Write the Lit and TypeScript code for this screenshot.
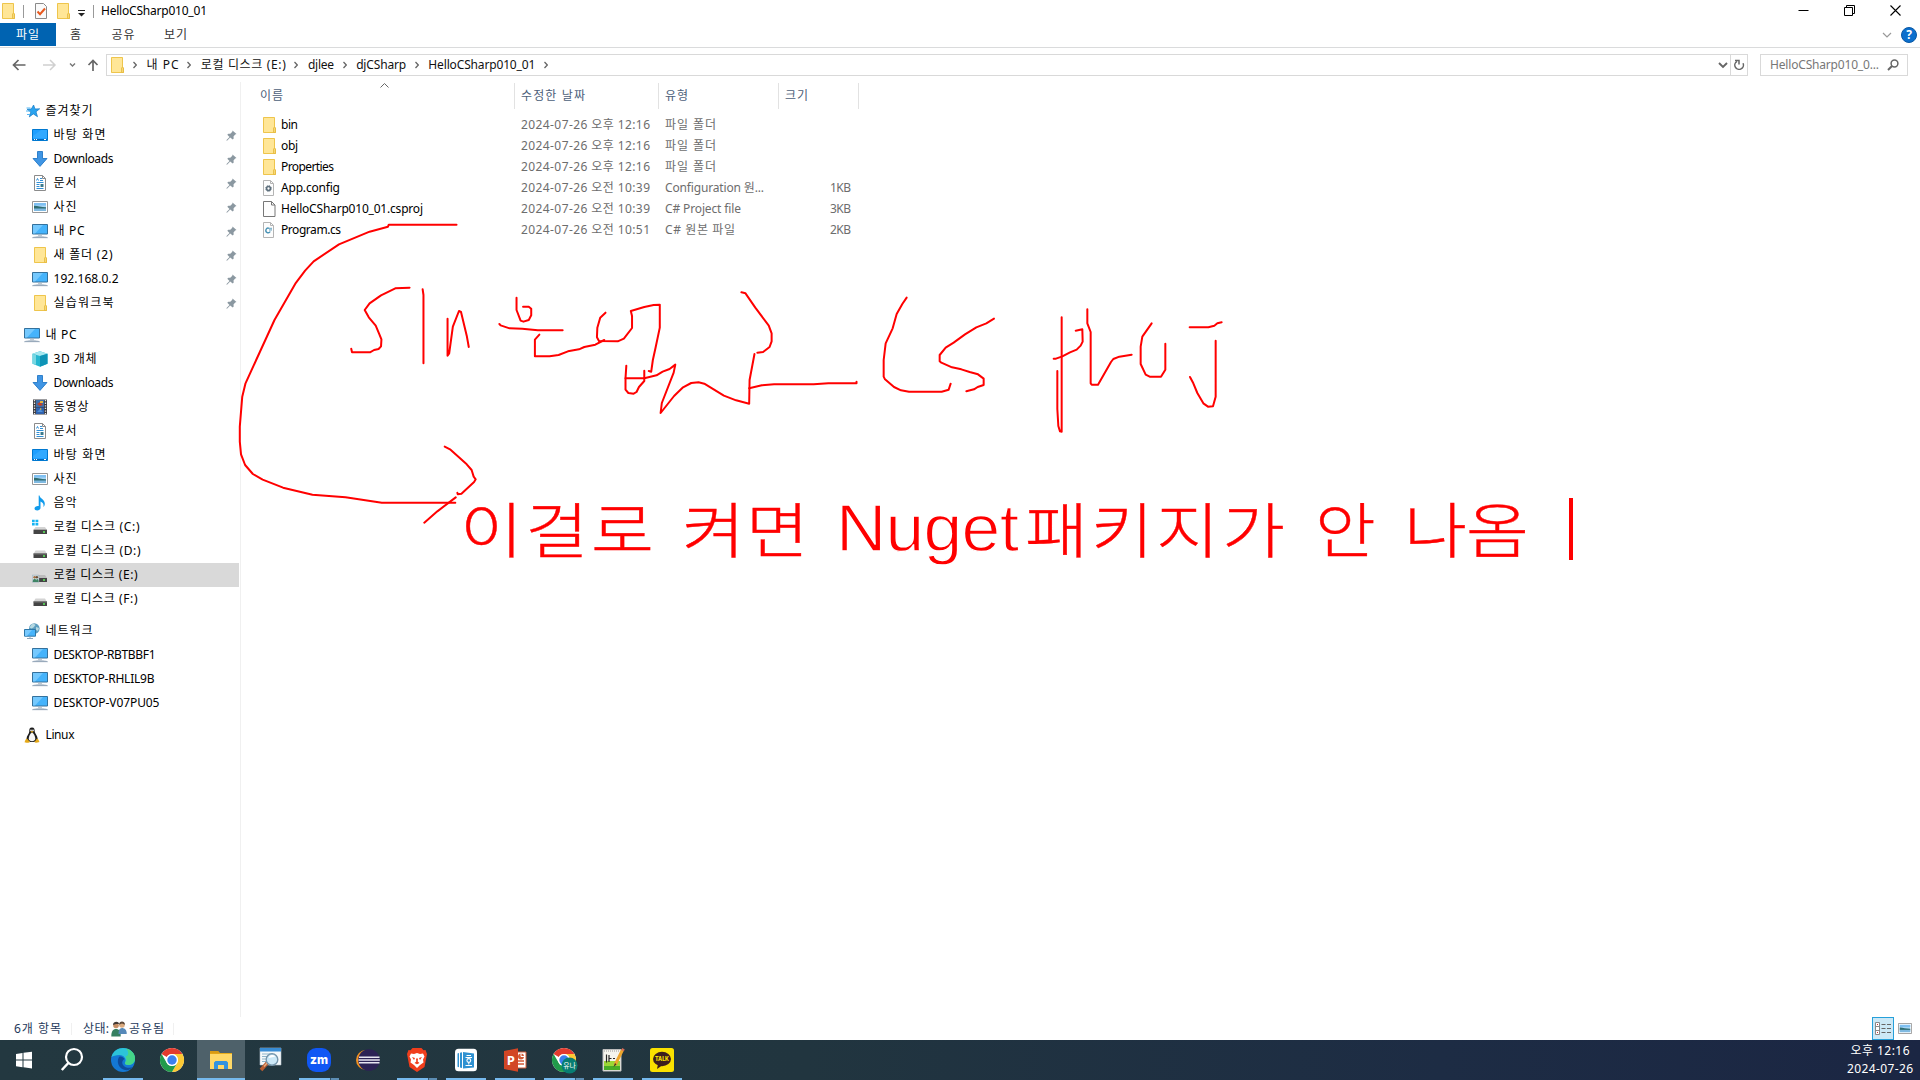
import { LitElement, html, svg, css } from "lit";
import { customElement, property, query } from "lit/decorators.js";
import { classMap } from "lit/directives/class-map.js";

/* A run of text tracked so that it fills a given width; glyphs may be stretched sideways. */
@customElement("fit-text")
class FitText extends LitElement {
  @property({ type: Number }) w = 0;
  @property({ type: Number }) stretch = 1;
  @property() text = "";
  @query(".run") run!: HTMLSpanElement;

  static styles = css`
    :host { display: block; flex: none; white-space: pre; }
    .run { display: inline-block; transform-origin: 0 50%; }
  `;

  updated() {
    const el = this.run;
    this.style.width = `${this.w}px`;
    el.style.letterSpacing = "0";
    el.style.transform = "none";
    const gaps = Math.max(1, [...this.text].length - 1);
    el.style.letterSpacing = `${(this.w / this.stretch - el.getBoundingClientRect().width) / gaps}px`;
    if (this.stretch !== 1) el.style.transform = `scaleX(${this.stretch})`;
  }

  render() {
    return html`<span class="run">${this.text}</span>`;
  }
}

const fit = (text: string, w: number, cls = "", stretch = 1) =>
  html`<fit-text class=${cls} .text=${text} .w=${w} .stretch=${stretch}></fit-text>`;

const icon = (body: unknown, size = 16) =>
  html`<svg class="ic" width=${size} height=${size} viewBox="0 0 16 16">${body}</svg>`;

const ICONS: Record<string, unknown> = {
  folder: svg`<path d="M2 .5h12v15H2z" fill="#ffe591"/><path d="M2.5.5h11v10.5h1v4.5h-12z" fill="#ffe697" stroke="#eec54c"/><path d="M12.5 15.5V11l1-1 1 1v4.5z" fill="#f7d775" stroke="#e5b93d" stroke-width=".8"/>`,
  star: svg`<path d="M9.600 2l1.400 4 4.700-.2-3.700 3 1.500 4.900-4.200-2.800-4 3 1.500-4.800-3.700-2.800 4.200-.3z" fill="#29a3ef" stroke="#1479c4" stroke-width=".7"/><path d="M2.500 5h4M2 8h4M3 11.500h3" stroke="#55b6f2" stroke-width="1"/>`,
  desktop: svg`<path d="M.5 2.500h15v11H.5z" fill="#1e9fff" stroke="#0078d0"/><path d="M1 9l8-6h6v8H1z" fill="#46b3ff" opacity=".5"/><path d="M1 12.500h14" stroke="#0567b8"/><path d="M2 12.500h1M4 12.500h1M12 12.500h2" stroke="#fff"/>`,
  download: svg`<path d="M5.500.5h5v7h4.500L8 15.400 1 7.500h4.500z" fill="#3f95e4" stroke="#2478c6" stroke-width=".9"/>`,
  document: svg`<path d="M2.500.5h8l3 3v12h-11z" fill="#fff" stroke="#8b8b8b"/><path d="M10.500.5v3h3" fill="none" stroke="#8b8b8b"/><path d="M4.500 5.500l1-2 1 2M8 3.500h2M8 5.500h3M4.500 7.500h7M4.500 9.500h3M4.500 11.500h3M4.500 13.500h7" fill="none" stroke="#318fd5"/><path d="M8.500 9h3v3h-3z" fill="#3c7a8c"/>`,
  picture: svg`<path d="M.5 2.500h15v11H.5z" fill="#fff" stroke="#979797"/><path d="M2 4h12v8H2z" fill="#a9d6f6"/><path d="M2 4h12v2.500H2z" fill="#7fc0f2"/><path d="M2 6.800c3-.2 7 1.400 12 1.400V10H2z" fill="#2f6d72"/><path d="M2 9.500h12V12H2z" fill="#7fb9e0"/>`,
  pc: svg`<path d="M.5 1.500h15v9.500H.5z" fill="#45b3fb" stroke="#34719c"/><path d="M1 2h10L3 10.500H1z" fill="#86d0ff" opacity=".75"/><path d="M6 11.500h4v1.200H6z" fill="#a6b5c0"/><path d="M.5 14.700C3 13.500 13 13.500 15.500 14.700z" fill="#90a5b8" stroke="#8fa2b4" stroke-width=".7"/>`,
  cube: svg`<path d="M8 .3l7.500 2.500v10L8 15.700.5 12.800v-10z" fill="#25b6cf"/><path d="M8 .3l7.500 2.500L8 5 .5 2.800z" fill="#a7e7ef"/><path d="M8 5l7.500-2.200v10L8 15.700z" fill="#0e93b6"/><path d="M.5 2.800L4 4v9.700l-3.500-.9z" fill="#78d7e2"/>`,
  video: svg`<path d="M1 .5h14v15H1z" fill="#3b3b40"/><path d="M4 1h8v7H4z" fill="#3f6ea8"/><path d="M4 8.500h8V15H4z" fill="#2f62ae"/><path d="M5 5l3-2 3 3-3 1z" fill="#c0402a"/><path d="M8 2h3v2H8z" fill="#e4b640"/><path d="M5 13l3-3 3 3z" fill="#4d8fd8"/><path d="M8 9l2 1-2 1z" fill="#e4b640"/><path d="M2.500 1v15M13.500 1v15" stroke="#e8e8e8" stroke-width="1.300" stroke-dasharray="1.300 1.300"/>`,
  music: svg`<path d="M7.500.5c.3 3 5.500 4 5.300 8.500-.1 1.600-.8 2.500-1.500 3 .8-3-.5-4.600-2.800-5.500v6.300c0 1.700-1.500 2.700-3.300 2.700-1.600 0-2.700-.8-2.700-2 0-1.700 2.300-3 4.200-2.500V.5z" fill="#109bec"/>`,
  drive: svg`<path d="M3.500 7.500h9.500l2 3.500H1.500z" fill="#d4d4d4"/><path d="M1.500 10.500h13.500V15H1.500z" fill="#444"/><path d="M1.500 10.500h13.500v1H1.500z" fill="#707070"/><path d="M11 13h2" stroke="#5cf05c" stroke-width="1.500"/>`,
  driveWin: svg`<path d="M0 .8h2.700v2.400H0zM3.500.8h2.800v2.400H3.500zM0 4h2.700v2.400H0zM3.500 4h2.800v2.400H3.500z" fill="#16b4f3"/><path d="M3.500 8h9.500l2 3H1.500z" fill="#d4d4d4"/><path d="M1.500 10.700h13.500v4.300H1.500z" fill="#444"/><path d="M11 13h2" stroke="#5cf05c" stroke-width="1.500"/>`,
  driveShare: svg`<path d="M4.500 8h8.500l2 3H3z" fill="#bcbcbc"/><path d="M7 11h8v4H7z" fill="#444"/><path d="M11 13h2" stroke="#5cf05c" stroke-width="1.500"/><path d="M.3 8.200h6.500v7H.3z" fill="#dbe7ee" stroke="#94a8b3" stroke-width=".6"/><circle cx="2.600" cy="10.300" r="1.300" fill="#a87040"/><circle cx="4.900" cy="10.300" r="1.200" fill="#6b5038"/><path d="M.8 15c0-4 3-4 3.400-1.500C4.700 11 6.700 12 6.700 15z" fill="#3e8464"/>`,
  network: svg`<circle cx="10.300" cy="5.500" r="5.300" fill="#5c9dbf"/><path d="M7.500 1.500c2-1.500 3-.5 4 .5l-2 2.500-2 1-2-1zM12 4l3 1-1 3-2-1z" fill="#b6d9e2"/><path d="M.5 6.500h11v6.700H.5z" fill="#47b4fb" stroke="#2d77a8"/><path d="M1 7h7l-5 6H1z" fill="#8bd2ff" opacity=".7"/><path d="M3 15.500h6M6 13.500v2" stroke="#8ea5b8"/>`,
  linux: svg`<path d="M8 .4c2.400 0 2.800 1.800 2.700 4 .1 1.800 3 4.200 3 7.700 0 2.300-2.500 3-5.700 3s-5.500-.8-5.500-3c0-3.400 2.700-5.500 2.800-7.700C5.200 2 5.600.4 8 .4z" fill="#1b1b1b"/><path d="M8 5.600c1.800.8 3.300 4 3.300 6.200 0 1.700-1.500 2.400-3.300 2.400s-3.300-.7-3.300-2.400C4.700 9.600 6.200 6.400 8 5.600z" fill="#f6f6f6"/><circle cx="7" cy="3.400" r=".8" fill="#fff"/><circle cx="9" cy="3.400" r=".8" fill="#fff"/><path d="M6.400 4.700L8 4l1.600.7L8 5.800z" fill="#edb21e"/><path d="M3 11.500l3 3.500c-1 1.300-3 .7-5.500.2.800-1.200.5-3 2.500-3.700zM13 11.500L10.500 15c1 1.300 2.500.5 5 0-1-1.200-.5-2.800-2.500-3.500z" fill="#e5a918"/>`,
  config: svg`<path d="M2.500.5h7l3 3v12h-10z" fill="#fdfdfd" stroke="#b4b4b4"/><path d="M9.500.5v3h3" fill="none" stroke="#b4b4b4"/><circle cx="7.500" cy="8.500" r="1.900" fill="none" stroke="#5d6f7c" stroke-width="1.500"/><circle cx="7.500" cy="8.500" r="2.900" fill="none" stroke="#5d6f7c" stroke-width="1" stroke-dasharray="1.140 1.140"/>`,
  blank: svg`<path d="M2.500.5h8l3.500 3.500v11.500H2.500z" fill="#fdfdfd" stroke="#777"/><path d="M10.500.5V4H14" fill="none" stroke="#777"/>`,
  cs: svg`<path d="M2.500.5h7l3 3v12h-10z" fill="#fdfdfd" stroke="#b4b4b4"/><path d="M9.500.5v3h3" fill="none" stroke="#b4b4b4"/><path d="M8 6.300A2.300 2.300 0 1 0 9.200 9.500" fill="none" stroke="#4a93b5" stroke-width="1.400"/><path d="M8.800 5.500v3.300M10.200 5.500v3.300M8 6.500h3M8 7.900h3" stroke="#4a93b5" stroke-width=".5"/>`,
  people: svg`<circle cx="5" cy="4.500" r="2.800" fill="#c89066"/><path d="M2 4c0-4 6-4 6-1L5 3z" fill="#433a35"/><path d="M.3 15.500C.3 10 2 8 5 8s5 2 4.700 7.500z" fill="#368061"/><circle cx="11" cy="4" r="2.800" fill="#dbaa7e"/><path d="M8 3.800c0-4.500 6-4.500 6 0L11 2.500z" fill="#5e4938"/><path d="M7.500 13c0-4 1-6 3.500-6s5 2 4.700 6z" fill="#5689b9"/>`,
  doccheck: svg`<path d="M2.500.5h8l3 3v12h-11z" fill="#fafafa" stroke="#8a8a8a"/><path d="M4.500 8.500l2.500 2.700 5-5.700" fill="none" stroke="#e8591f" stroke-width="2"/>`,
};

const pin = html`<svg class="pin" width="11" height="11" viewBox="0 0 11 11"><path d="M6.500.5l4 3.600-1.300.5-1.700 2 .2 2-1 1L4.200 7.500 1 10.700l-.7-.5L3.500 7 1.300 4.700l1-.9h2l2-2z" fill="#8b98a1"/></svg>`;

type Item = { icon: string; label: string; w: number; head?: boolean; pin?: boolean; on?: boolean };
const GROUPS: Item[][] = [
  [
    { icon: "star", label: "즐겨찾기", w: 47, head: true },
    { icon: "desktop", label: "바탕 화면", w: 52, pin: true },
    { icon: "download", label: "Downloads", w: 60, pin: true },
    { icon: "document", label: "문서", w: 23, pin: true },
    { icon: "picture", label: "사진", w: 23, pin: true },
    { icon: "pc", label: "내 PC", w: 31, pin: true },
    { icon: "folder", label: "새 폴더 (2)", w: 59, pin: true },
    { icon: "pc", label: "192.168.0.2", w: 65, pin: true },
    { icon: "folder", label: "실습워크북", w: 60, pin: true },
  ],
  [
    { icon: "pc", label: "내 PC", w: 31, head: true },
    { icon: "cube", label: "3D 개체", w: 43 },
    { icon: "download", label: "Downloads", w: 60 },
    { icon: "video", label: "동영상", w: 35 },
    { icon: "document", label: "문서", w: 23 },
    { icon: "desktop", label: "바탕 화면", w: 52 },
    { icon: "picture", label: "사진", w: 23 },
    { icon: "music", label: "음악", w: 23 },
    { icon: "driveWin", label: "로컬 디스크 (C:)", w: 86 },
    { icon: "drive", label: "로컬 디스크 (D:)", w: 87 },
    { icon: "driveShare", label: "로컬 디스크 (E:)", w: 84, on: true },
    { icon: "drive", label: "로컬 디스크 (F:)", w: 84 },
  ],
  [
    { icon: "network", label: "네트워크", w: 47, head: true },
    { icon: "pc", label: "DESKTOP-RBTBBF1", w: 102 },
    { icon: "pc", label: "DESKTOP-RHLIL9B", w: 101 },
    { icon: "pc", label: "DESKTOP-V07PU05", w: 106 },
  ],
  [{ icon: "linux", label: "Linux", w: 29, head: true }],
];

const FILES = [
  ["folder", "bin", 17, "2024-07-26 오후 12:16", 129, "파일 폴더", 51, "", 0],
  ["folder", "obj", 17, "2024-07-26 오후 12:16", 129, "파일 폴더", 51, "", 0],
  ["folder", "Properties", 53, "2024-07-26 오후 12:16", 129, "파일 폴더", 51, "", 0],
  ["config", "App.config", 59, "2024-07-26 오전 10:39", 129, "Configuration 원...", 99, "1KB", 21],
  ["blank", "HelloCSharp010_01.csproj", 142, "2024-07-26 오전 10:39", 129, "C# Project file", 76, "3KB", 21],
  ["cs", "Program.cs", 60, "2024-07-26 오전 10:51", 129, "C# 원본 파일", 70, "2KB", 21],
] as const;

const CRUMBS: [string, number][] = [
  ["내 PC", 32], ["로컬 디스크 (E:)", 85], ["djlee", 26], ["djCSharp", 50], ["HelloCSharp010_01", 107],
];

/* Taskbar artwork, drawn on 24x24 boards. */
const chromeArt = svg`<circle cx="12" cy="12" r="12" fill="#fff"/><path d="M12 0A12 12 0 0 1 22.400 6H12a6 6 0 0 0-5.200 3L1.600 6A12 12 0 0 1 12 0z" fill="#e33b2e"/><path d="M22.400 6A12 12 0 0 1 12 24l5.200-9A6 6 0 0 0 12 6z" fill="#fcc934"/><path d="M12 24A12 12 0 0 1 1.600 6l5.200 9a6 6 0 0 0 10.400 0z" fill="#219b4b"/><circle cx="12" cy="12" r="6" fill="#fff"/><circle cx="12" cy="12" r="4.700" fill="#3c80ee"/>`;

const APPS: { art: unknown; bar?: boolean; multi?: boolean; on?: boolean }[] = [
  { art: svg`<path d="M3 6l6.500-1v6.600H3zM10.500 4.800L19 3.700v7.900h-8.500zM3 12.500h6.500v6.700L3 18.200zM10.500 12.500H19v8l-8.500-1.200z" fill="#fff"/>` },
  { art: svg`<circle cx="12" cy="9" r="8" fill="none" stroke="#fff" stroke-width="2.200"/><path d="M6.300 15L-.2 22" stroke="#fff" stroke-width="2.500"/>` },
  { bar: true, art: svg`<circle cx="12" cy="12" r="12" fill="#1478d4"/><path d="M.4 9.200C2 3 7 0 12 0c7 0 12 5 12 10.500 0 4-3 6.500-6.500 6.500-3 0-4-1.300-3.500-2.500 2-3-1-7.500-5.500-7.500-3.500 0-6.500 1-8.100 2.200z" fill="#2cc4d8"/><path d="M15 .5C21 2 24 6 24 10.500c0 4-3 6.500-6.500 6.500-3 0-4-1.300-3.500-2.500 1.500-1 2-4 .5-6 4-.5 3-6 .5-8z" fill="#45d588"/><path d="M8 9c-3 5 0 12 6 13 3 .5 6-.5 8-3-3 1.500-8 1-10-2-1.500-2.500-.5-5 1.500-6C12 9 10 8 8 9z" fill="#0d4b9c"/>` },
  { art: chromeArt },
  { on: true, bar: true, art: svg`<path d="M1 3h8l2 2h12v16H1z" fill="#e9ad1c"/><path d="M1 6h22v15H1z" fill="#ffd868"/><path d="M1 3h8l1.500 2.500H1z" fill="#d99a12"/><path d="M5 21v-6.500L6.500 13h11l1.500 1.500V21h-4v-4H9v4z" fill="#3393df"/>` },
  { art: svg`<path d="M2 0h21v17H2z" fill="#f4f8fa" stroke="#b6c4cc" stroke-width=".6"/><path d="M2 0h21v3.500H2z" fill="#398dd5"/><path d="M4 6h11M4 8.500h9M4 11h10M4 13.500h8" stroke="#8db5cb"/><path d="M10 14L3 22" stroke="#b85c31" stroke-width="3.500"/><path d="M10 14l-4 4.500" stroke="#e9ad82" stroke-width="1.300"/><circle cx="14" cy="11.500" r="5.800" fill="#c9e8f8" fill-opacity=".95" stroke="#7696ac" stroke-width="1.400"/><path d="M10.500 10a4 4 0 0 1 7-1.500z" fill="#fff"/>` },
  { bar: true, multi: true, art: svg`<rect width="24" height="24" rx="9" fill="#1057f4"/><text x="12" y="16" text-anchor="middle" font-size="12.500" font-weight="800" font-family="Inter, sans-serif" fill="#fff" textLength="18" lengthAdjust="spacingAndGlyphs">zm</text>` },
  { art: svg`<circle cx="10" cy="12" r="10" fill="#f49320"/><circle cx="13" cy="12" r="10.800" fill="#2c2255"/><path d="M3 9.300h20.500M2.500 12h21.300M3 14.700h20.500" stroke="#e7e5f1" stroke-width="1.400"/>` },
  { bar: true, multi: true, art: svg`<path d="M7.500 0h9l2 2.300 2-.2L22 6l-2.500 13-7.500 5-7.500-5L2 6l1.500-3.900 2 .2z" fill="#f03e1c"/><path d="M6 5.500l3 .5 3-1 3 1 3-.5 1.500 3-1.500 3 .5 3-3.500 2.500-3 3-3-3L5.500 14.500l.5-3-1.500-3z" fill="#fff"/><path d="M7 9l3 1-1 2zM17 9l-3 1 1 2zM11 10.500h2l-.3 3 1.800 1.500-2.500 1.200L9.500 15l1.800-1.500z" fill="#f03e1c"/>` },
  { bar: true, art: svg`<rect x="1" y=".7" width="22" height="22.500" rx="3.500" fill="#fff"/><path d="M9 4l11 1.500v14L9 20.500z" fill="#2f91d1"/><path d="M3.500 5.500l1.500-.5v14.300l-1.500-.6zM6 4.800l2-.5v15.700l-2-.6z" fill="#2f91d1"/><path d="M12.500 7.500h4.500M11.500 9.500h6.500M14.800 14.500v2M11.500 17.500h6.500" stroke="#fff" stroke-width="1.100"/><circle cx="14.800" cy="12.500" r="1.900" fill="none" stroke="#fff" stroke-width="1.100"/>` },
  { bar: true, art: svg`<path d="M12 4h11v16H12z" fill="#fff" stroke="#d25a36"/><path d="M15 13h6M15 16h6" stroke="#d25a36" stroke-width="1.300"/><circle cx="18" cy="8.500" r="3" fill="#d25a36"/><path d="M18 5v3.500h3.500" stroke="#fff" fill="none"/><path d="M1 3l14-2.800v23.600L1 21z" fill="#d24625"/><text x="7.800" y="16.800" text-anchor="middle" font-size="13" font-weight="700" font-family="Open Sans, sans-serif" fill="#fff">P</text>` },
  { bar: true, multi: true, art: svg`${chromeArt}<circle cx="17.500" cy="17.500" r="8" fill="#087d72"/><text x="17.500" y="20.200" text-anchor="middle" font-size="6.800" font-family="Noto Sans CJK KR, sans-serif" fill="#fff">유나</text>` },
  { bar: true, art: svg`<path d="M2 1.500h18v21.500H2z" fill="#f5f5ed" stroke="#bcbcbc"/><path d="M3 13h16v9H3z" fill="#9bd736"/><path d="M3 18h16v4H3z" fill="#49ad27"/><path d="M3 3h16" stroke="#999" stroke-dasharray="1 1"/><path d="M5.500 6.500v8M8 7v7M8 10.500h2.500M12 10.500h2" stroke="#272727" stroke-width="1.200"/><path d="M21.500 2L14 17" stroke="#eca52d" stroke-width="3"/><path d="M20.800 1l2.500 1.300" stroke="#d36b59" stroke-width="2"/><path d="M14 15l-1.500 4 3-2.500z" fill="#453521"/>` },
  { bar: true, art: svg`<rect width="24" height="24" rx="2.500" fill="#fae100"/><ellipse cx="12" cy="11" rx="9" ry="7.200" fill="#3c1e1e"/><path d="M8 16l-1 5 5-3.500z" fill="#3c1e1e"/><text x="12" y="13.300" text-anchor="middle" font-size="6.300" font-weight="800" font-family="Inter, sans-serif" fill="#fae100" textLength="14" lengthAdjust="spacingAndGlyphs">TALK</text>` },
];

/* Pen strokes; each set has its own origin and scale. */
const INK_LEFT = [
  "555,44 389,44 387,50 342,65 267,103 205,154 184,182 160,221 109,330 38,520 30,560 24,650 24,695 27,733 37,765 56,792 80,809 130,833 202,854 283,862 372,878 552,878",
  "526,710 539,718 580,763 592,780 597,800 602,808 598,816 567,851 558,853 557,848",
  "553,862 508,904 476,938",
  "440,233 405,235 370,256 342,280 330,300 340,322 357,347 365,370 371,388 370,409 364,417 353,420 343,427 299,427 297,416",
  "472,238 474,255 474,460",
  "533,326 533,437 537,430 546,350 561,303 566,306 580,377 585,411",
  "702,263 702,300 712,332 719,335 732,330 738,316 738,296 732,290 718,290",
  "660,342 663,346 685,355 716,356 754,361 815,361",
  "758,374 747,389 747,439 783,439 805,435 828,424 855,418 868,411 895,404 917,390",
  "920,308 907,323 900,353 899,382 904,393 950,394 965,386 985,354 985,318 982,303 1015,291 1038,285 1053,284 1053,353 1043,411 1036,450 1032,485 1026,483",
  "971,467 969,505 969,539 976,549 989,551 996,546 1002,531 1015,513 1015,482",
  "969,505 1015,505 1045,496 1060,485 1077,477 1091,464 1087,488 1058,579 1055,609 1088,558 1110,532 1130,519 1148,517 1162,521 1210,557 1240,571 1272,581 1273,510 1285,432",
  "1253,247 1263,250 1287,293 1320,347 1327,370 1327,394 1322,411 1306,426 1292,428",
  "1272,535 1303,526 1333,523 1430,523 1466,520 1535,520 1535,515",
];
const INK_RIGHT = [
  "200,53 187,72 170,102 158,145 137,190 131,240 131,290 135,298 162,321 183,331 207,335 305,335 326,329 332,311",
  "462,116 439,130 409,142 375,163 341,188 317,203 299,225 299,244 304,248 336,262 364,268 389,276 414,283 431,296 431,315 413,321 402,328 379,334",
  "665,112 665,455 660,454 655,438 652,387 652,273",
  "707,152 727,148 728,185 722,197 710,209 690,217 667,229 648,236 641,236",
  "742,88 742,130 752,156 752,310 755,314 774,314 813,246 820,237 838,230 875,224",
  "935,130 907,170 902,200 902,252 917,284 929,290 963,290 976,269 976,191",
  "1049,142 1105,142 1123,137 1132,130 1145,127",
  "1127,182 1127,350 1119,379 1104,380 1090,370 1072,339 1060,310 1050,291",
];
const ink = (sets: string[]) =>
  sets.map((points) => svg`<polyline class="ink" points=${points}></polyline>`);

@customElement("app-root")
class AppRoot extends LitElement {
  static styles = css`
    :host { display: block; }
    * { box-sizing: border-box; }
    svg { display: block; flex: none; }
    .window {
      position: relative; width: 1920px; height: 1080px; overflow: hidden; background: #fff;
      display: flex; flex-direction: column; color: #000;
      font: 12px/16px "Noto Sans", "Noto Sans CJK KR", sans-serif;
    }
    .row { display: flex; align-items: center; }
    .title { height: 23px; padding-bottom: 1px; }
    .title .sep { width: 1px; height: 13px; background: #999; }
    .sep.a { margin: 0 9px 0 7px; }
    .sep.b { margin: 0 7px 0 8px; }
    .title .fold2 { margin-left: 6px; }
    .title .drop { margin: 5px 0 0 7px; }
    .spring { flex: 1; }
    .controls { margin: -2px 19px 0 0; gap: 35px; }
    .tabs { height: 25px; border-bottom: 1px solid #dadbdc; color: #333; }
    .tabs .file { width: 56px; height: 23px; margin-bottom: 1px; padding-left: 16px; background: #0063b1; color: #fff; }
    .tabs .home { margin-left: 14px; }
    .tabs .share { margin-left: 29.500px; }
    .tabs .view { margin-left: 29.500px; }
    .tabs .chev { margin-right: 9px; }
    .tabs .help { margin-right: 3px; }
    .address { height: 34px; padding: 0 12px 0 12px; color: #111; }
    .box { height: 22px; border: 1px solid #d9d9d9; }
    .path { width: 1642px; margin-left: 7px; padding-left: 2px; }
    .crumb { margin: 0 8.600px 0 9.600px; }
    .arrow { width: 4px; }
    .path .first { margin-left: 8px; }
    .refresh { width: 17px; height: 20px; border-left: 1px solid #d9d9d9; justify-content: center; padding-left: 1px; }
    .search { width: 148px; margin-left: 12px; padding: 0 8px 0 9px; color: #777; justify-content: space-between; }
    .main { flex: 1; display: flex; min-height: 0; }
    .side { width: 241px; border-right: 1px solid #f0f0f0; padding-top: 17px; height: 935px; margin-right: 1px; }
    .group { margin-bottom: 8px; }
    .item { height: 24px; width: 239px; padding-left: 32px; gap: 5.500px; }
    .item fit-text { margin-top: -1px; }
    .item.head { padding-left: 24px; }
    .item.on { background: #d9d9d9; }
    .pin { margin-left: auto; margin-right: 2.500px; }
    .list { padding-left: 18px; }
    .cols { height: 26px; margin-top: 1px; color: #4c607a; position: relative; }
    .cols .c { height: 26px; border-right: 1px solid #e2e2e2; padding-left: 6px; }
    .cols .c1 { width: 255px; padding-left: 0; }
    .cols .c2 { width: 144px; }
    .cols .c3 { width: 120px; }
    .cols .c4 { width: 80px; }
    .caret { position: absolute; left: 120px; top: 0; }
    .files { padding-top: 5px; }
    .f { height: 21px; color: #6d6d6d; }
    .f fit-text { margin-top: 1px; }
    .f .n { width: 261px; gap: 4px; color: #000; padding-left: 1px; }
    .f .d { width: 144px; }
    .f .t { width: 120px; }
    .f .s { width: 66px; justify-content: flex-end; }
    .status { height: 23px; color: #1e395b; padding-left: 14px; }
    .status .bar { width: 1px; height: 12px; background: #f0f0f0; }
    .status .b1 { margin: 0 11px 0 10px; }
    .status .b2 { margin-left: 9px; }
    .status .ic { margin: 0 2px; }
    .viewon { width: 22px; height: 23px; background: #cce8f6; border: 1px solid #26a0da; justify-content: center; }
    .thumbs { margin: 0 8px 0 4px; }
    .task { height: 40px; padding-left: 1px; background: linear-gradient(90deg, #233840 0%, #21353f 42%, #1d2c44 75%, #1b2643 100%); }
    .app { position: relative; width: 48px; height: 40px; margin-right: 1px; display: flex; align-items: center; justify-content: center; }
    .app.on { background: #4e616a; }
    .app.bar::after { content: ""; position: absolute; left: 4px; width: 40px; bottom: 0; height: 2px; background: #76b9ed; }
    .app.on.bar::after { left: 0; width: 48px; }
    .app.multi::after { background: linear-gradient(90deg, #76b9ed 31px, #35536b 31px, #35536b 32px, #5c8db3 32px); }
    .clock { color: #fff; display: flex; flex-direction: column; align-items: center; gap: 2px; margin-right: 7px; }
    .overlay { position: absolute; left: 0; top: 0; pointer-events: none; }
    .ink { fill: none; stroke: #f00; stroke-width: 2px; stroke-linejoin: round; stroke-linecap: round; vector-effect: non-scaling-stroke; }
    .note {
      position: absolute; left: 460px; top: 488px; height: 80px; display: flex; align-items: center;
      color: #f00; font: 300 60px/80px "Noto Sans CJK KR", sans-serif; pointer-events: none;
    }
    .note .ko { -webkit-text-stroke: .4px #f00; margin-top: -3px; }
    .latin { font: 400 67px/80px "Liberation Sans", sans-serif; -webkit-text-stroke: 1.300px #fff; margin-top: -1px; }
    .w1 { margin-right: 28px; }
    .w2 { margin-right: 27px; }
    .w3 { margin-right: 6px; }
    .w4 { margin-right: 30px; }
    .w5 { margin-right: 33px; }
    .beam { width: 4px; height: 62px; background: #f00; margin: 2px 0 0 40px; }
  `;

  private arrow() {
    return html`<svg class="arrow" width="4" height="8" viewBox="0 0 4 8"><path d="M.5 1L3.300 4 .5 7" fill="none" stroke="#666" stroke-width="1.300"/></svg>`;
  }

  render() {
    return html`<div class="window">
      <div class="title row">
        ${icon(ICONS.folder)}<div class="sep a"></div>${icon(ICONS.doccheck)}
        <div class="fold2">${icon(ICONS.folder)}</div>
        <svg class="drop" width="7" height="7" viewBox="0 0 7 7"><path d="M0 .5h7" stroke="#222"/><path d="M0 3h7L3.500 6.500z" fill="#222"/></svg>
        <div class="sep b"></div>${fit("HelloCSharp010_01", 106)}
        <div class="spring"></div>
        <div class="controls row">
          <svg width="11" height="11"><path d="M.5 5.500h10" stroke="#000"/></svg>
          <svg width="11" height="11"><path d="M.5 2.500h8v8h-8zM2.500 2.500v-2h8v8h-2" fill="none" stroke="#000"/></svg>
          <svg width="11" height="11"><path d="M.5.5l10 10M10.500.5l-10 10" stroke="#000" stroke-width="1.100"/></svg>
        </div>
      </div>
      <div class="tabs row">
        <div class="file row">${fit("파일", 23)}</div>
        ${fit("홈", 12, "home")}${fit("공유", 23, "share")}${fit("보기", 23, "view")}
        <div class="spring"></div>
        <svg class="chev" width="10" height="6"><path d="M1 1l4 4 4-4" fill="none" stroke="#999" stroke-width="1.200"/></svg>
        <svg class="help" width="16" height="16"><circle cx="8" cy="8" r="7.500" fill="#0c6fcd" stroke="#0958a5"/><text x="8" y="12.200" text-anchor="middle" font-size="12" font-weight="700" fill="#fff">?</text></svg>
      </div>
      <div class="address row">
        <svg width="87" height="14" fill="none"><path d="M13.500 7H1.500M6.500 2L1.500 7l5 5" stroke="#666" stroke-width="1.700"/><path d="M31 7h12M38 2l5 5-5 5" stroke="#d0d0d0" stroke-width="1.500"/><path d="M58 5.500l2.500 2.500L63 5.500" stroke="#777" stroke-width="1.400"/><path d="M81 13V2.500M76.500 7L81 2.500 85.500 7" stroke="#666" stroke-width="1.700"/></svg>
        <div class="path box row">
          ${icon(ICONS.folder)}
          <div class="first">${this.arrow()}</div>
          ${CRUMBS.map(([c, w]) => html`${fit(c, w, "crumb")}${this.arrow()}`)}
          <div class="spring"></div>
          <svg width="14" height="8"><path d="M3 2l4 4 4-4" fill="none" stroke="#666" stroke-width="1.900"/></svg>
          <div class="refresh row"><svg width="11" height="12" viewBox="0 0 11 12"><path d="M3 2.300A4.300 4.300 0 1 0 9 4.200" fill="none" stroke="#666" stroke-width="1.500"/><path d="M1 1.500h4v4" fill="none" stroke="#666" stroke-width="1.500"/></svg></div>
        </div>
        <div class="search box row">${fit("HelloCSharp010_0...", 109)}
          <svg width="12" height="12"><circle cx="7.500" cy="4.500" r="3.400" fill="none" stroke="#666" stroke-width="1.500"/><path d="M5 7L1 11" stroke="#666" stroke-width="1.900"/></svg>
        </div>
      </div>
      <div class="main">
        <div class="side">
          ${GROUPS.map((g) => html`<div class="group">${g.map((i) => html`
            <div class=${classMap({ item: true, row: true, head: !!i.head, on: !!i.on })}>
              ${icon(ICONS[i.icon])}${fit(i.label, i.w)}${i.pin ? pin : ""}
            </div>`)}</div>`)}
        </div>
        <div class="list">
          <div class="cols row">
            <div class="c c1 row">${fit("이름", 23)}</div>
            <div class="c c2 row">${fit("수정한 날짜", 64)}</div>
            <div class="c c3 row">${fit("유형", 23)}</div>
            <div class="c c4 row">${fit("크기", 23)}</div>
            <svg class="caret" width="9" height="5"><path d="M.5 4.500l4-4 4 4" fill="none" stroke="#666"/></svg>
          </div>
          <div class="files">
            ${FILES.map(([ic, n, nw, d, dw, t, tw, s, sw]) => html`<div class="f row">
              <div class="n row">${icon(ICONS[ic])}${fit(n, nw)}</div>
              <div class="d">${fit(d, dw)}</div>
              <div class="t">${fit(t, tw)}</div>
              <div class="s row">${s ? fit(s, sw) : ""}</div>
            </div>`)}
          </div>
        </div>
      </div>
      <div class="status row">
        ${fit("6개 항목", 47)}<div class="bar b1"></div>${fit("상태:", 26)}${icon(ICONS.people)}${fit("공유됨", 35)}<div class="bar b2"></div>
        <div class="spring"></div>
        <div class="viewon row"><svg width="16" height="13"><path d="M.5.5h4v12h-4zM.5 4.500h4M.5 8.500h4" fill="#fff" stroke="#888"/><path d="M2 2.500h1M2 10.500h1" stroke="#c33"/><path d="M6.500 2.500h4M12 2.500h4M6.500 6.500h4M12 6.500h4M6.500 10.500h4M12 10.500h4" stroke="#666"/></svg></div>
        <div class="thumbs"><svg width="14" height="11" viewBox="0 2 16 12" preserveAspectRatio="none">${ICONS.picture}</svg></div>
      </div>
      <div class="task row">
        ${APPS.map((a) => html`<div class=${classMap({ app: true, bar: !!a.bar, multi: !!a.multi, on: !!a.on })}>
          <svg width="24" height="24" viewBox="0 0 24 24" overflow="visible">${a.art}</svg></div>`)}
        <div class="spring"></div>
        <div class="clock">${fit("오후 12:16", 59)}${fit("2024-07-26", 66)}</div>
      </div>
      <svg class="overlay" width="1920" height="1080">
        <g transform="translate(230 210) scale(.40816 .33333)">${ink(INK_LEFT)}</g>
        <g transform="translate(840 280) scale(.33333)">${ink(INK_RIGHT)}</g>
      </svg>
      <div class="note">
        ${fit("이걸로", 194, "ko w1", 1.14)}${fit("켜면", 127, "ko w2", 1.14)}${fit("Nuget", 183, "latin w3", 1.04)}${fit("패키지가", 260, "ko w4", 1.14)}${fit("안", 56, "ko w5", 1.1)}${fit("나옴", 125, "ko", 1.14)}
        <div class="beam"></div>
      </div>
    </div>`;
  }
}
